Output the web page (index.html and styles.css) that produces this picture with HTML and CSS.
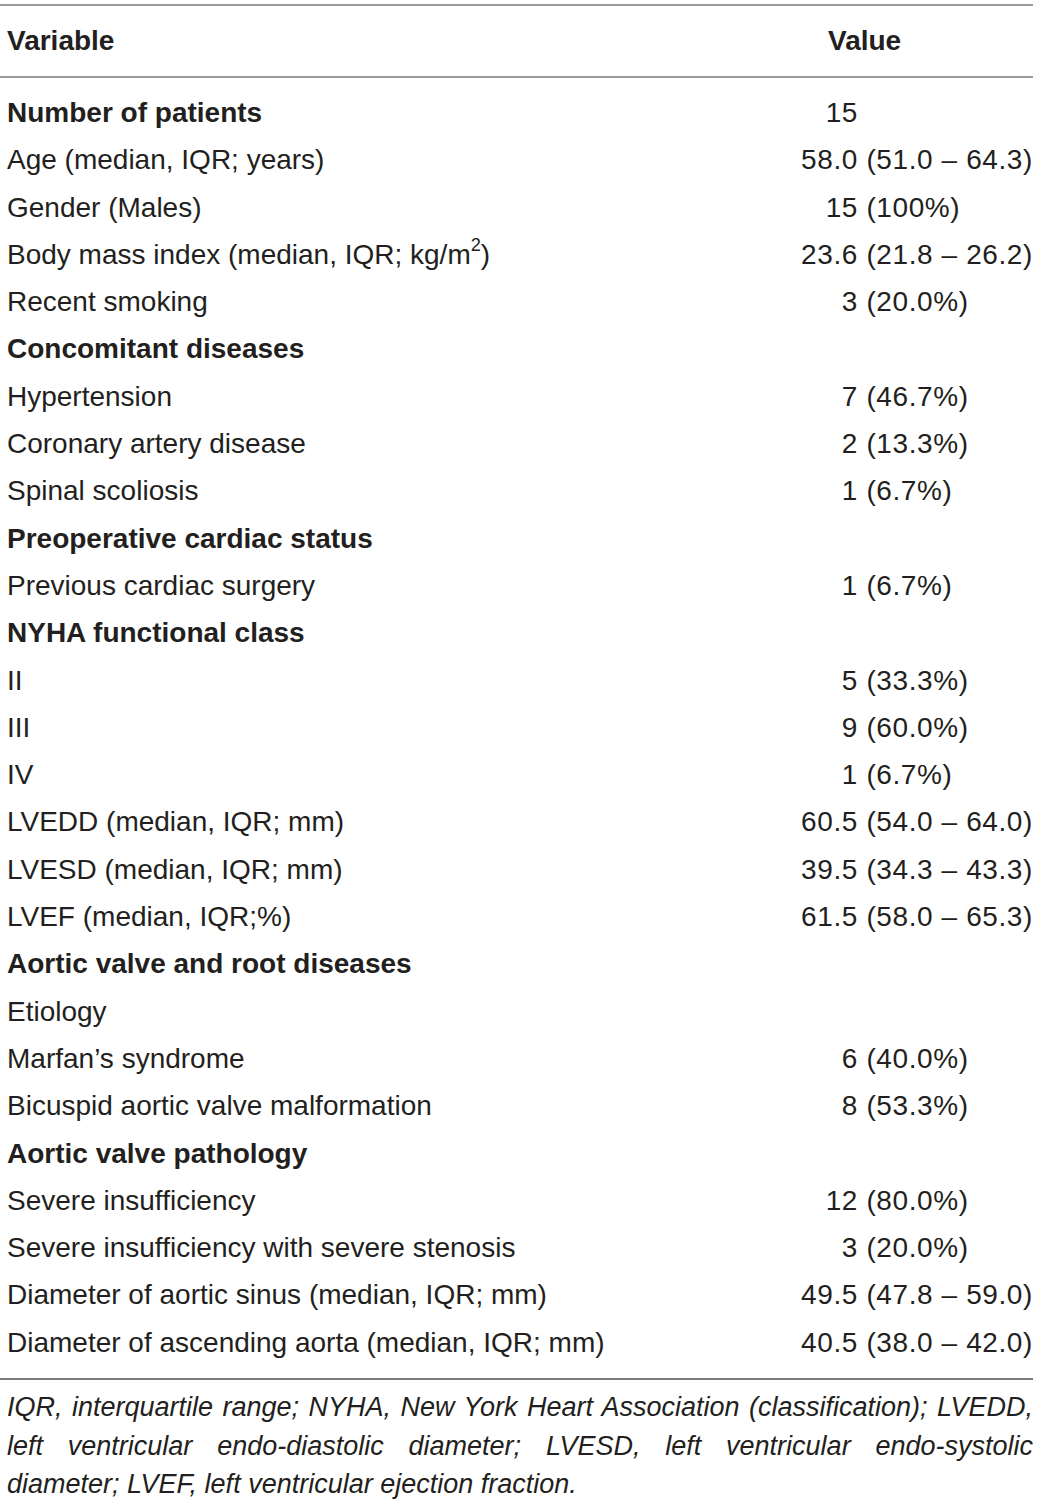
FILE: index.html
```html
<!DOCTYPE html>
<html lang="en">
<head>
    <meta charset="UTF-8">
    <title>Patient characteristics</title>
    <link rel="stylesheet" href="styles.css">
</head>
<body>

<table class="data-table">
    <colgroup>
        <col class="label-col">
        <col class="value-col">
    </colgroup>
    <thead>
        <tr>
            <th class="label-cell">Variable</th>
            <th class="value-cell">Value</th>
        </tr>
    </thead>
    <tbody>
        <tr class="first-row"><td class="label-cell"><strong>Number of patients</strong></td><td class="value-cell"><span class="num">15</span></td></tr>
        <tr><td class="label-cell">Age (median, IQR; years)</td><td class="value-cell"><span class="num">58.0</span> (51.0 – 64.3)</td></tr>
        <tr><td class="label-cell">Gender (Males)</td><td class="value-cell"><span class="num">15</span> (100%)</td></tr>
        <tr><td class="label-cell">Body mass index (median, IQR; kg/m<sup>2</sup>)</td><td class="value-cell"><span class="num">23.6</span> (21.8 – 26.2)</td></tr>
        <tr><td class="label-cell">Recent smoking</td><td class="value-cell"><span class="num">3</span> (20.0%)</td></tr>
        <tr><td class="label-cell"><strong>Concomitant diseases</strong></td><td class="value-cell"></td></tr>
        <tr><td class="label-cell">Hypertension</td><td class="value-cell"><span class="num">7</span> (46.7%)</td></tr>
        <tr><td class="label-cell">Coronary artery disease</td><td class="value-cell"><span class="num">2</span> (13.3%)</td></tr>
        <tr><td class="label-cell">Spinal scoliosis</td><td class="value-cell"><span class="num">1</span> (6.7%)</td></tr>
        <tr><td class="label-cell"><strong>Preoperative cardiac status</strong></td><td class="value-cell"></td></tr>
        <tr><td class="label-cell">Previous cardiac surgery</td><td class="value-cell"><span class="num">1</span> (6.7%)</td></tr>
        <tr><td class="label-cell"><strong>NYHA functional class</strong></td><td class="value-cell"></td></tr>
        <tr><td class="label-cell">II</td><td class="value-cell"><span class="num">5</span> (33.3%)</td></tr>
        <tr><td class="label-cell">III</td><td class="value-cell"><span class="num">9</span> (60.0%)</td></tr>
        <tr><td class="label-cell">IV</td><td class="value-cell"><span class="num">1</span> (6.7%)</td></tr>
        <tr><td class="label-cell">LVEDD (median, IQR; mm)</td><td class="value-cell"><span class="num">60.5</span> (54.0 – 64.0)</td></tr>
        <tr><td class="label-cell">LVESD (median, IQR; mm)</td><td class="value-cell"><span class="num">39.5</span> (34.3 – 43.3)</td></tr>
        <tr><td class="label-cell">LVEF (median, IQR;%)</td><td class="value-cell"><span class="num">61.5</span> (58.0 – 65.3)</td></tr>
        <tr><td class="label-cell"><strong>Aortic valve and root diseases</strong></td><td class="value-cell"></td></tr>
        <tr><td class="label-cell">Etiology</td><td class="value-cell"></td></tr>
        <tr><td class="label-cell">Marfan’s syndrome</td><td class="value-cell"><span class="num">6</span> (40.0%)</td></tr>
        <tr><td class="label-cell">Bicuspid aortic valve malformation</td><td class="value-cell"><span class="num">8</span> (53.3%)</td></tr>
        <tr><td class="label-cell"><strong>Aortic valve pathology</strong></td><td class="value-cell"></td></tr>
        <tr><td class="label-cell">Severe insufficiency</td><td class="value-cell"><span class="num">12</span> (80.0%)</td></tr>
        <tr><td class="label-cell">Severe insufficiency with severe stenosis</td><td class="value-cell"><span class="num">3</span> (20.0%)</td></tr>
        <tr><td class="label-cell">Diameter of aortic sinus (median, IQR; mm)</td><td class="value-cell"><span class="num">49.5</span> (47.8 – 59.0)</td></tr>
        <tr class="last-row"><td class="label-cell">Diameter of ascending aorta (median, IQR; mm)</td><td class="value-cell"><span class="num">40.5</span> (38.0 – 42.0)</td></tr>
    </tbody>
</table>

<p class="footnote">
    <span class="fn-line">IQR, interquartile range; NYHA, New York Heart Association (classification); LVEDD,</span>
    <span class="fn-line">left ventricular endo-diastolic diameter; LVESD, left ventricular endo-systolic</span>
    <span class="fn-line last">diameter; LVEF, left ventricular ejection fraction.</span>
</p>

</body>
</html>
```

FILE: styles.css
```css
body {
    margin: 0;
    font-family: "Liberation Sans", Arial, sans-serif;
    color: #231f20;
    background: #fff;
}

.data-table {
    width: 1033px;
    margin-top: 4px;
    border-collapse: collapse;
    table-layout: fixed;
    font-size: 28px;
}

.label-col {
    width: 780px;
}

.value-col {
    width: 253px;
}

.data-table th {
    height: 70px;
    padding: 0;
    text-align: left;
    font-weight: bold;
    border-top: 2px solid #9a9a9a;
    border-bottom: 2px solid #9a9a9a;
}

.data-table td {
    padding: 0;
    line-height: 47.3px;
    white-space: nowrap;
}

.label-cell {
    padding-left: 7px !important;
}

td.value-cell {
    letter-spacing: 0.6px;
}

th.value-cell {
    padding-left: 48px !important;
}

.num {
    display: inline-block;
    width: 78px;
    text-align: right;
}

sup {
    font-size: 65%;
    line-height: 0;
    vertical-align: 0.7em;
}

.first-row td {
    padding-top: 11px;
}

.last-row td {
    padding-bottom: 12px;
    border-bottom: 2px solid #7a7a7a;
}

.footnote {
    width: 1026px;
    margin: 8px 0 0 7px;
    font-style: italic;
    font-size: 27px;
    line-height: 38.5px;
}

.fn-line {
    display: block;
    text-align: justify;
    text-align-last: justify;
    white-space: nowrap;
}

.fn-line.last {
    text-align-last: left;
}
```
